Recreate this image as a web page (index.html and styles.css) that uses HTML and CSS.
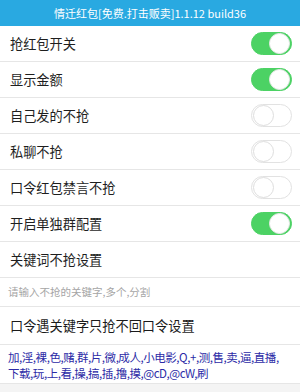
FILE: index.html
```html
<!DOCTYPE html>
<html lang="zh">
<head>
<meta charset="utf-8">
<link rel="stylesheet" href="styles.css">
</head>
<body>
<div class="app">
  <header class="title">情迁红包[免费.打击贩卖]1.1.12 build36</header>
  <div class="row"><span class="label">抢红包开关</span><span class="switch on"><span class="knob"></span></span></div>
  <div class="row"><span class="label">显示金额</span><span class="switch on"><span class="knob"></span></span></div>
  <div class="row"><span class="label">自己发的不抢</span><span class="switch"><span class="knob"></span></span></div>
  <div class="row"><span class="label">私聊不抢</span><span class="switch"><span class="knob"></span></span></div>
  <div class="row"><span class="label">口令红包禁言不抢</span><span class="switch"><span class="knob"></span></span></div>
  <div class="row"><span class="label">开启单独群配置</span><span class="switch on"><span class="knob"></span></span></div>
  <div class="row"><span class="label">关键词不抢设置</span></div>
  <div class="input-row">请输入不抢的关键字,多个,分割</div>
  <div class="section">口令遇关键字只抢不回口令设置</div>
  <div class="keywords">加,淫,裸,色,赌,群,片,微,成人,小电影,Q,+,测,售,卖,逼,直播,<br>下载,玩,上,看,操,搞,插,撸,摸,@cD,@cW,刷</div>
</div>
</body>
</html>
```
FILE: styles.css
```css
* { box-sizing: border-box; }
html, body {
  margin: 0;
  padding: 0;
  background: #f4f4f4;
  font-family: "Noto Sans CJK SC", "Noto Sans", sans-serif;
}
.app {
  width: 300px;
  height: 392px;
  overflow: hidden;
  background: #f4f4f4;
}
.title {
  height: 26px;
  background: #29a9e1;
  color: #fff;
  font-size: 11px;
  line-height: 26px;
  text-align: center;
}
.row {
  height: 36px;
  background: #fff;
  border-bottom: 1px solid #e6e6e6;
  display: flex;
  align-items: center;
  justify-content: space-between;
  padding: 0 8px 0 10px;
}
.label {
  font-size: 13.2px;
  color: #1e1e1e;
}
.switch {
  width: 41px;
  height: 23px;
  border-radius: 12px;
  border: 1px solid #e2e2e2;
  background: #fff;
  display: flex;
  align-items: center;
  padding: 0 1px;
}
.switch .knob {
  width: 21px;
  height: 21px;
  border-radius: 50%;
  background: #fff;
  border: 1px solid #dedede;
}
.switch.on {
  background: #4cd264;
  border-color: #4cd264;
  justify-content: flex-end;
}
.switch.on .knob {
  border-color: #e8e8e8;
}
.input-row {
  height: 29px;
  background: #fff;
  border-bottom: 1px solid #e6e6e6;
  font-size: 10.5px;
  color: #a5a5a5;
  line-height: 28px;
  padding-left: 8px;
}
.section {
  height: 38px;
  background: #fff;
  border-bottom: 1px solid #e6e6e6;
  font-size: 13.2px;
  color: #1a1a1a;
  line-height: 37px;
  padding-left: 10px;
}
.keywords {
  height: 39px;
  background: #fff;
  border-bottom: 1px solid #e6e6e6;
  color: #2b2aa6;
  font-size: 11.5px;
  letter-spacing: -0.45px;
  line-height: 16px;
  padding: 4px 0 0 8px;
  white-space: nowrap;
}
```
